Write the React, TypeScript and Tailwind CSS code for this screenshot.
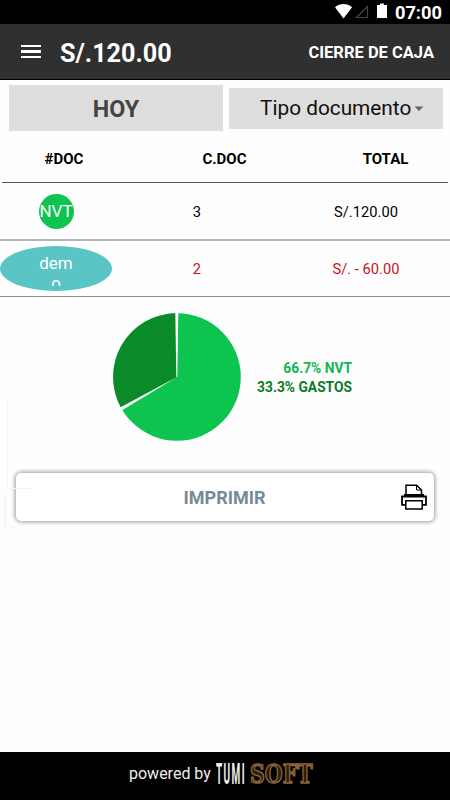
interface DocRow {
  label: string;
  count: number;
  total: string;
  expense?: boolean;
}

const rows: DocRow[] = [
  { label: "NVT", count: 3, total: "S/.120.00" },
  { label: "demo", count: 2, total: "S/. - 60.00", expense: true },
];

function StatusBar() {
  return (
    <div className="h-6 bg-black flex items-start justify-end pr-[8px] text-white shrink-0">
      <svg className="mt-[3px] mr-[6px]" width="54" height="17" viewBox="0 0 54 17">
        <path d="M0 4.2C5-0.2 12-0.2 17 4.2L8.5 15.5Z" fill="#fff" />
        <path d="M32.5 3.5V14.5H21.5Z" fill="none" stroke="#444" strokeWidth="1.2" />
        <path d="M42 2h3V0.5h4V2h3v13H42Z" fill="#fff" />
      </svg>
      <span className="text-[18.3px] leading-[26px] font-bold">07:00</span>
    </div>
  );
}

function Header() {
  return (
    <header className="h-14 bg-[#303030] border-b border-black flex items-center text-white font-bold pl-[21px] pr-[16px] shrink-0">
      <div className="flex flex-col gap-[3px] w-5 mr-[19px]">
        <span className="h-[2.5px] bg-white" />
        <span className="h-[2.5px] bg-white" />
        <span className="h-[2.5px] bg-white" />
      </div>
      <h1 className="text-[25.2px] leading-none pt-[5px]">S/.120.00</h1>
      <span className="ml-auto text-[16.5px] pt-[4px]">CIERRE DE CAJA</span>
    </header>
  );
}

function Badge({ row }: { row: DocRow }) {
  if (row.expense) {
    return (
      <div className="w-[112px] h-[45px] rounded-[50%] bg-[#5bc4c5] text-white text-center">
        <div className="w-[34px] h-[40px] mx-auto pt-[7px] overflow-hidden break-all text-[17px] leading-[20px]">
          {row.label}
        </div>
      </div>
    );
  }
  return (
    <div className="size-[35px] rounded-full bg-[#0dc44e] text-white text-[17px] flex items-center justify-center pt-[2px]">
      {row.label}
    </div>
  );
}

function Pie() {
  return (
    <svg width="130" height="130" viewBox="-65 -65 130 130">
      <circle r="63.8" fill="#0dc44e" />
      <path d="M0 0V-63.8A63.8 63.8 0 0 0 -55.3 31.9Z" fill="#0a8a28" />
      <path d="M-1.7 -65H1.3L0.3 0H-0.7Z" fill="#fff" />
      <path d="M-57.8 31L-56.2 34L0 0Z" fill="#fff" />
    </svg>
  );
}

function PrinterIcon() {
  return (
    <svg width="26" height="26" viewBox="0 0 26 26" fill="none" stroke="#000" strokeWidth="1.5">
      <path d="M5 11V1.2H15.5L20.5 6V11" />
      <path d="M15.5 1.5V6H20" strokeWidth="1" />
      <path d="M4.5 20.8H1V12.5H25V20.8H21.5" strokeWidth="1.8" />
      <path d="M3 11.5H23" strokeWidth="3" />
      <path d="M4.8 16.8H21.2V25H4.8Z" fill="#fff" />
    </svg>
  );
}

function Logo() {
  return (
    <div className="flex gap-[5px] pb-[4px]">
      <svg width="29" height="32" viewBox="0 0 29 32">
        <text
          x="0"
          y="26"
          fill="#eee"
          fontFamily="Roboto"
          fontWeight="700"
          fontSize="29"
          letterSpacing="4"
          transform="scale(0.345 1)"
        >
          TUMI
        </text>
      </svg>
      <svg width="66" height="32" viewBox="0 0 66 32">
        <text
          x="0"
          y="25"
          fill="#2a1c0c"
          stroke="#8a6437"
          strokeWidth="1.6"
          fontFamily="DejaVu Serif"
          fontWeight="700"
          fontSize="26"
          transform="scale(0.79 1)"
        >
          SOFT
        </text>
      </svg>
    </div>
  );
}

export default function App() {
  return (
    <div className="relative w-[450px] h-[800px] overflow-hidden bg-[#fefefe] flex flex-col font-[Roboto,sans-serif] text-black">
      <StatusBar />
      <Header />

      <div className="flex gap-[6px] items-center pl-[9px] pr-[7px] pt-[5px] shrink-0">
        <button className="w-[214px] h-[46px] bg-[#dedede] text-[#444] text-[23.3px] font-bold pt-[2px]">HOY</button>
        <button className="w-[214px] h-[41px] bg-[#dedede] text-[#111] text-[20.8px] flex items-center pl-[31px] pt-px">
          Tipo documento
          <svg className="ml-[3px]" width="10" height="6" viewBox="0 0 10 6">
            <path d="M0.5 0.5H9.5L5 5Z" fill="#666" />
          </svg>
        </button>
      </div>

      <div className="h-[52px] mx-[2px] border-b border-[#555] flex items-center text-[15px] font-bold text-center shrink-0 pt-[6px]">
        <span className="w-[124px]">#DOC</span>
        <span className="w-[197px]">C.DOC</span>
        <span className="w-[125px]">TOTAL</span>
      </div>

      {rows.map((row) => (
        <div
          key={row.label}
          className={
            row.expense
              ? "h-[56px] border-b border-[#8b8b8b] flex items-center text-[14.7px] text-[#c8101a] shrink-0"
              : "h-[58px] border-b-2 border-[#b0b5b9] flex items-center text-[14.7px] shrink-0"
          }
        >
          <div className="w-[112px] flex justify-center">
            <Badge row={row} />
          </div>
          <span className="w-[170px] text-center pt-[2px]">{row.count}</span>
          <span className="w-[168px] text-center pt-[2px]">{row.total}</span>
        </div>
      ))}

      <div className="flex pt-[15px] pl-[112px] shrink-0">
        <Pie />
        <div className="w-[110px] pt-[47px] text-right text-[13.8px] leading-[19px] font-bold">
          <p className="text-[#12b552]">66.7% NVT</p>
          <p className="text-[#0a7a22]">33.3% GASTOS</p>
        </div>
      </div>

      <button className="mt-[31px] mx-[16px] h-[48px] rounded-[5px] bg-white shadow-[0_0_4px_1px_#999] flex items-center shrink-0 pr-[7px]">
        <span className="flex-1 pl-[32px] text-center text-[18px] font-bold text-[#758b97]">IMPRIMIR</span>
        <PrinterIcon />
      </button>

      {/* faint card edges behind the button */}
      <div className="absolute left-[7px] top-[400px] w-[25px] h-[89px] border-l border-b border-[#f5f5f5] rounded-bl-[4px]" />
      <div className="absolute left-[4px] top-[495px] w-[12px] h-[33px] border-l-2 border-b border-[#f5f6f6] rounded-bl-[4px]" />

      <footer className="mt-auto h-[48px] bg-black text-[#eee] text-[16px] flex items-center pl-[129px] shrink-0">
        <span className="mr-[5px] pb-[5px]">powered by</span>
        <Logo />
      </footer>
    </div>
  );
}
